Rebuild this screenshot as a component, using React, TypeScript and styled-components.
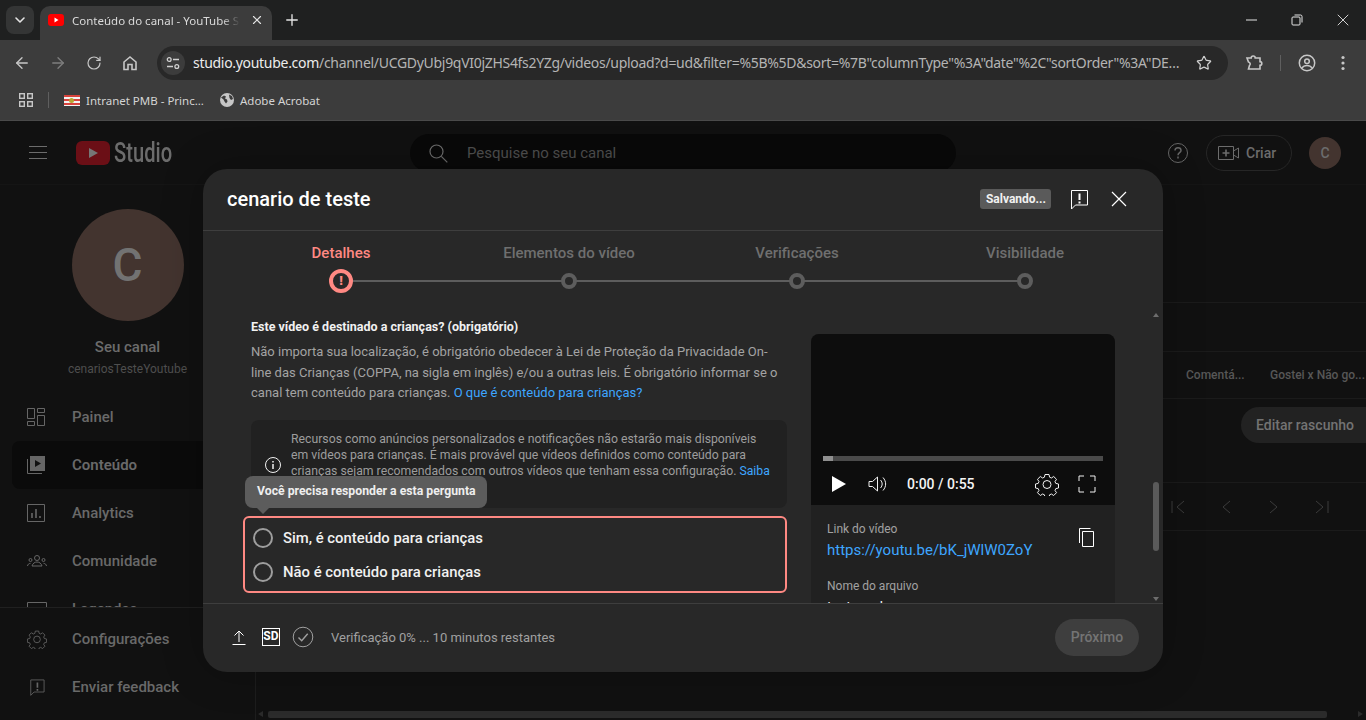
import React from "react";
import styled, { createGlobalStyle } from "styled-components";
import {
  ArrowLeft,
  ArrowRight,
  ChevronDown,
  Plus,
  RotateCw,
  Star,
  X,
} from "lucide-react";

const GlobalStyle = createGlobalStyle`
  html, body { margin: 0; padding: 0; height: 720px; overflow: hidden; background: #111; }
  * { box-sizing: border-box; }
  body { font-family: Roboto, "Liberation Sans", sans-serif; }
`;

/* ---------- browser chrome ---------- */

const Page = styled.div`
  width: 1366px;
  height: 720px;
  position: relative;
  display: flex;
  flex-direction: column;
  overflow: hidden;
`;

const TabStrip = styled.div`
  height: 40px;
  background: #1f2020;
  display: flex;
  align-items: flex-end;
  padding-left: 6px;
  color: #e4e4e4;
`;

const TabSearch = styled.div`
  width: 28px;
  height: 28px;
  margin: 0 6px 6px 0;
  border-radius: 8px;
  background: #343535;
  display: flex;
  align-items: center;
  justify-content: center;
`;

const Tab = styled.div`
  width: 232px;
  height: 34px;
  background: #3c3c3c;
  border-radius: 10px 10px 0 0;
  display: flex;
  align-items: center;
  padding: 0 8px 6px;
  font: 11.5px "Noto Sans", sans-serif;
`;

const TabTitle = styled.span`
  margin-left: 8px;
  width: 178px;
  white-space: nowrap;
  overflow: hidden;
  color: #dadada;
  mask-image: linear-gradient(90deg, #000 150px, transparent 168px);
`;

const NewTab = styled.div`
  width: 40px;
  height: 34px;
  padding-bottom: 6px;
  display: flex;
  align-items: center;
  justify-content: center;
`;

const WindowControls = styled.div`
  margin-left: auto;
  height: 40px;
  display: flex;
  align-items: center;
`;

const WindowButton = styled.div`
  width: 46px;
  display: flex;
  justify-content: center;
`;

const Toolbar = styled.div`
  height: 45px;
  background: #3c3c3c;
  display: flex;
  align-items: center;
  padding: 1px 0 0 4px;
  color: #c7c7c7;
`;

const ToolButton = styled.div<{ $dim?: boolean }>`
  width: 36px;
  height: 34px;
  display: flex;
  align-items: center;
  justify-content: center;
  color: ${(p) => (p.$dim ? "#7d7d7d" : "#c7c7c7")};
`;

const Omnibox = styled.div`
  width: 1071px;
  height: 34px;
  margin: 0 8px 0 9px;
  border-radius: 17px;
  background: #282828;
  display: flex;
  align-items: center;
  padding: 0 16px 0 4px;
`;

const SiteInfo = styled.div`
  width: 24px;
  height: 24px;
  border-radius: 50%;
  background: #3c3c3c;
  display: flex;
  align-items: center;
  justify-content: center;
  flex: none;
`;

const Url = styled.div`
  flex: 1;
  margin: 0 12px 0 8px;
  font: 14px "Noto Sans", sans-serif;
  letter-spacing: -0.3px;
  line-height: 18px;
  padding-bottom: 1px;
  color: #b4b4b4;
  white-space: nowrap;
  overflow: hidden;
  text-overflow: ellipsis;
`;

const UrlHost = styled.span`
  color: #ececec;
`;

const ToolSeparator = styled.div`
  width: 1px;
  height: 16px;
  background: #5f5f5f;
  margin: 0 8px;
`;

const Bookmarks = styled.div`
  height: 36px;
  background: #3c3c3c;
  border-bottom: 1px solid #4a4a4a;
  display: flex;
  align-items: center;
  padding: 0 0 5px 19px;
  font: 11.5px "Noto Sans", sans-serif;
  color: #d4d4d4;
`;

const BarSeparator = styled.div`
  width: 1px;
  height: 16px;
  background: #5f5f5f;
  margin: 0 15px 0 15px;
`;

const Bookmark = styled.div`
  display: flex;
  align-items: center;
  gap: 6px;
  margin-right: 16px;
  white-space: nowrap;
`;

const Flag = styled.div`
  width: 16px;
  height: 11px;
  background: repeating-linear-gradient(180deg, #d8433c 0 2px, #f3f3f3 2px 4px);
  position: relative;
`;

const FlagSeal = styled.div`
  position: absolute;
  left: 5px;
  top: 3px;
  width: 5px;
  height: 5px;
  background: #b8a632;
  border-radius: 50%;
`;

/* ---------- dimmed studio page ---------- */

const Studio = styled.div`
  flex: 1;
  min-height: 0;
  display: flex;
  flex-direction: column;
  background: #111111;
  color: #6c6c6c;
`;

const StudioHeader = styled.div`
  height: 64px;
  flex: none;
  display: flex;
  align-items: center;
  padding: 0 25px 0 29px;
  border-bottom: 1px solid #151515;
`;

const Burger = styled.div`
  width: 18px;
  height: 13px;
  border-top: 1px solid #6c6c6c;
  border-bottom: 1px solid #6c6c6c;
  position: relative;
  margin-right: 29px;
  &::after {
    content: "";
    position: absolute;
    left: 0;
    right: 0;
    top: 5px;
    height: 1px;
    background: #6c6c6c;
  }
`;

const LogoMark = styled.div`
  width: 34px;
  height: 24px;
  background: #6b0f16;
  border-radius: 6px;
  display: flex;
  align-items: center;
  justify-content: center;
`;

const LogoPlay = styled.div`
  width: 0;
  height: 0;
  border-left: 9px solid #767676;
  border-top: 5.5px solid transparent;
  border-bottom: 5.5px solid transparent;
`;

const LogoText = styled.div`
  font: 500 28px Roboto, sans-serif;
  color: #6c6c6c;
  margin-left: 4px;
  width: 58px;
  transform: scaleX(0.72);
  transform-origin: left center;
`;

const SearchBox = styled.div`
  width: 546px;
  height: 38px;
  margin-left: 238px;
  background: #090909;
  border-radius: 19px;
  display: flex;
  align-items: center;
  padding-left: 18px;
  gap: 19px;
  font-size: 15px;
  color: #4e4e4e;
`;

const HeaderRight = styled.div`
  margin-left: auto;
  display: flex;
  align-items: center;
`;

const CreateButton = styled.div`
  width: 86px;
  height: 36px;
  margin: 0 17px 0 17px;
  border: 1px solid #262626;
  border-radius: 18px;
  display: flex;
  align-items: center;
  padding-left: 11px;
  gap: 7px;
  font-size: 14px;
  font-weight: 500;
`;

const SmallAvatar = styled.div`
  width: 32px;
  height: 32px;
  border-radius: 50%;
  background: #43342f;
  display: flex;
  align-items: center;
  justify-content: center;
  font-size: 14px;
  font-weight: 500;
`;

const StudioBody = styled.div`
  flex: 1;
  min-height: 0;
  display: flex;
`;

const Sidebar = styled.aside`
  width: 256px;
  flex: none;
  border-right: 1px solid #1d1d1d;
  display: flex;
  flex-direction: column;
`;

const ChannelBox = styled.div`
  padding-top: 24px;
  height: 208px;
  flex: none;
  display: flex;
  flex-direction: column;
  align-items: center;
`;

const BigAvatar = styled.div`
  width: 112px;
  height: 112px;
  border-radius: 50%;
  background: #43342f;
  display: flex;
  align-items: center;
  justify-content: center;
  font-size: 46px;
  font-weight: 500;
  color: #727272;
`;

const ChannelName = styled.div`
  margin-top: 17px;
  font-size: 15px;
  font-weight: 500;
`;

const ChannelHandle = styled.div`
  margin-top: 6px;
  font-size: 12px;
  color: #4e4e4e;
`;

const NavList = styled.div`
  flex: 1;
  min-height: 0;
  overflow: hidden;
  padding-left: 12px;
`;

const NavItem = styled.div<{ $active?: boolean }>`
  height: 48px;
  display: flex;
  align-items: center;
  gap: 25px;
  padding-left: 15px;
  font-size: 15px;
  font-weight: ${(p) => (p.$active ? 600 : 500)};
  border-radius: 8px 0 0 8px;
  background: ${(p) => (p.$active ? "#0b0b0b" : "transparent")};
  color: #696969;
`;

const NavIconSlot = styled.span`
  display: flex;
  width: 20px;
  flex: none;
`;

const SideFooter = styled.div`
  flex: none;
  height: 113px;
  border-top: 1px solid #202020;
  padding: 7px 0 0 12px;
  background: #111111;
`;

const MainArea = styled.main`
  flex: 1;
  display: flex;
  flex-direction: column;
  min-width: 0;
`;

const RowLine = styled.div<{ $h: number }>`
  height: ${(p) => p.$h}px;
  flex: none;
  border-bottom: 1px solid #1b1b1b;
  display: flex;
  align-items: center;
`;

const HeadCell = styled.div<{ $w: number }>`
  width: ${(p) => p.$w}px;
  font-size: 12px;
  font-weight: 500;
  color: #575757;
  white-space: nowrap;
`;

const DraftButton = styled.div`
  margin-left: auto;
  width: 125px;
  height: 36px;
  margin-top: -32px;
  background: #222222;
  border-radius: 18px 0 0 18px;
  display: flex;
  align-items: center;
  padding-left: 15px;
  font-size: 14px;
  font-weight: 500;
  color: #737373;
  white-space: nowrap;
`;

const Pager = styled.div`
  display: flex;
  gap: 24px;
  margin-left: 910px;
  color: #3c3c3c;
`;

const HScroll = styled.div`
  margin: auto 39px 2px 12px;
  height: 7px;
  background: #2b2b2b;
  border-radius: 2px;
  position: relative;
  &::before,
  &::after {
    content: "";
    position: absolute;
    top: 0;
    border-top: 3.5px solid transparent;
    border-bottom: 3.5px solid transparent;
  }
  &::before {
    left: -10px;
    border-right: 5px solid #2b2b2b;
  }
  &::after {
    right: -36px;
    border-left: 5px solid #2b2b2b;
  }
`;

/* ---------- upload dialog ---------- */

const Dialog = styled.section`
  position: absolute;
  left: 203px;
  top: 169px;
  width: 960px;
  height: 503px;
  background: #282828;
  border-radius: 24px;
  display: flex;
  flex-direction: column;
  color: #fff;
  overflow: hidden;
  box-shadow: 0 0 40px rgba(0, 0, 0, 0.25);
`;

const DialogHeader = styled.header`
  height: 62px;
  flex: none;
  border-bottom: 1px solid #3e3e3e;
  display: flex;
  align-items: center;
  padding: 0 36px 2px 24px;
`;

const DialogTitle = styled.h1`
  margin: 0;
  font-size: 20px;
  font-weight: 500;
  flex: 1;
`;

const SavingChip = styled.div`
  height: 20px;
  padding: 0 5px 0 6px;
  border-radius: 3px;
  background: #5a5a5a;
  font-size: 12px;
  font-weight: 700;
  line-height: 20px;
  color: #f1f1f1;
  margin-right: 16px;
`;

const HeaderIcon = styled.div<{ $gap?: number }>`
  display: flex;
  margin-left: ${(p) => p.$gap ?? 0}px;
`;

const Stepper = styled.div`
  height: 79px;
  flex: none;
  padding: 0 24px;
  display: flex;
`;

const Step = styled.div<{ $line: boolean; $active?: boolean }>`
  width: 228px;
  position: relative;
  display: flex;
  flex-direction: column;
  align-items: center;
  padding-top: 14px;
  font-size: 15px;
  font-weight: 500;
  color: ${(p) => (p.$active ? "#ff8983" : "#6f6f6f")};
  &::after {
    content: "";
    display: ${(p) => (p.$line ? "block" : "none")};
    position: absolute;
    left: 50%;
    width: 100%;
    top: 49px;
    height: 2px;
    background: #5d5d5d;
  }
`;

const StepLabel = styled.div`
  height: 17px;
  line-height: 17px;
`;

const StepDotSlot = styled.div`
  height: 24px;
  margin-top: 7px;
  display: flex;
  align-items: center;
  position: relative;
  z-index: 1;
`;

const StepDot = styled.div`
  width: 16px;
  height: 16px;
  border-radius: 50%;
  border: 4px solid #5d5d5d;
  background: #282828;
`;

const StepError = styled.div`
  width: 24px;
  height: 24px;
  border-radius: 50%;
  border: 4px solid #ff8983;
  background: #282828;
  color: #ff8983;
  font-size: 13px;
  font-weight: 900;
  line-height: 16px;
  text-align: center;
`;

const ScrollArea = styled.div`
  flex: 1;
  min-height: 0;
  display: flex;
  gap: 24px;
  padding: 0 0 0 48px;
  overflow: hidden;
  position: relative;
`;

const LeftColumn = styled.div`
  width: 536px;
  flex: none;
  padding-top: 8px;
  position: relative;
`;

const QuestionTitle = styled.div`
  font-size: 12.5px;
  font-weight: 700;
  line-height: 18px;
  color: #f1f1f1;
`;

const Explain = styled.p`
  margin: 6px 0 0;
  font-size: 13px;
  line-height: 20.5px;
  color: #a3a3a3;
`;

const Anchor = styled.span`
  color: #3ea6ff;
`;

const Notice = styled.div`
  margin-top: 16px;
  height: 88px;
  background: #212121;
  border-radius: 8px;
  display: flex;
  align-items: flex-start;
  padding: 11px 0 0 13px;
  gap: 9px;
  font-size: 12.25px;
  line-height: 16px;
  color: #9d9d9d;
`;

const NoticeIcon = styled.div`
  margin-top: 25px;
  flex: none;
  display: flex;
`;

const NoticeText = styled.div`
  width: 483px;
`;

const Tooltip = styled.div`
  position: absolute;
  left: -6px;
  top: 166px;
  width: 242px;
  height: 32px;
  background: #5c5c5c;
  border-radius: 8px;
  font-size: 12.25px;
  font-weight: 700;
  line-height: 30px;
  padding-left: 12px;
  color: #eeeeee;
  z-index: 2;
  &::after {
    content: "";
    position: absolute;
    left: 12px;
    top: 32px;
    border-left: 6px solid transparent;
    border-right: 6px solid transparent;
    border-top: 6px solid #5c5c5c;
  }
`;

const RadioBox = styled.div`
  margin: 8px 0 0 -8px;
  width: 544px;
  height: 77px;
  border: 2px solid #ff8983;
  border-radius: 6px;
  padding: 3px 0 0 8px;
`;

const RadioRow = styled.label`
  height: 34px;
  display: flex;
  align-items: center;
  gap: 10px;
  font-size: 14.85px;
  font-weight: 500;
  color: #f1f1f1;
`;

const RadioCircle = styled.span`
  width: 20px;
  height: 20px;
  border-radius: 50%;
  border: 2px solid #9e9e9e;
  flex: none;
`;

const PreviewCard = styled.div`
  width: 304px;
  flex: none;
  margin-top: 24px;
  border-radius: 8px 8px 0 0;
  background: #212121;
  overflow: hidden;
  height: 300px;
`;

const VideoBox = styled.div`
  height: 171px;
  background: #0d0d0d;
  padding: 122px 12px 0;
`;

const Progress = styled.div`
  height: 5px;
  background: #4a4a4a;
`;

const ProgressFill = styled.div<{ $pct: number }>`
  height: 5px;
  width: ${(p) => p.$pct}%;
  background: #8f8f8f;
`;

const Controls = styled.div`
  height: 46px;
  display: flex;
  align-items: center;
  padding: 0 4px 0 8px;
`;

const TimeLabel = styled.div`
  margin-left: 16px;
  font-size: 14px;
  font-weight: 500;
  color: #f4f4f4;
  flex: 1;
`;

const CtlIcon = styled.div<{ $gap?: number }>`
  display: flex;
  margin-left: ${(p) => p.$gap ?? 0}px;
`;

const InfoBlock = styled.div`
  padding: 16px 16px 0;
  position: relative;
`;

const InfoLabel = styled.div`
  font-size: 12px;
  line-height: 16px;
  color: #a1a1a1;
`;

const InfoLink = styled.div`
  margin-top: 3px;
  font-size: 15px;
  line-height: 20px;
  color: #3ea6ff;
  height: 38px;
`;

const InfoValue = styled.div`
  margin-top: 3px;
  font-size: 14px;
  line-height: 20px;
  color: #f1f1f1;
`;

const CopyIcon = styled.div`
  position: absolute;
  right: 17px;
  top: 20px;
  display: flex;
`;

const ScrollRail = styled.div`
  position: absolute;
  right: 0;
  top: 0;
  bottom: 0;
  width: 12px;
`;

const RailArrow = styled.div<{ $up?: boolean }>`
  position: absolute;
  left: 2px;
  ${(p) => (p.$up ? "top: 3px;" : "bottom: 2px;")}
  border-left: 3.5px solid transparent;
  border-right: 3.5px solid transparent;
  ${(p) => (p.$up ? "border-bottom" : "border-top")}: 4px solid #6d6d6d;
`;

const RailThumb = styled.div`
  position: absolute;
  left: 2px;
  top: 172px;
  width: 6px;
  height: 69px;
  border-radius: 3px;
  background: #5a5a5a;
`;

const DialogFooter = styled.footer`
  height: 69px;
  flex: none;
  border-top: 1px solid #3e3e3e;
  display: flex;
  align-items: center;
  padding: 0 24px 2px 28px;
`;

const FooterStatus = styled.div`
  margin-left: 17px;
  font-size: 13px;
  color: #a0a0a0;
  flex: 1;
`;

const SdBadge = styled.div`
  width: 18px;
  height: 18px;
  margin: 0 12px 0 15px;
  border: 1.5px solid #fff;
  font-size: 12px;
  font-weight: 700;
  line-height: 15px;
  text-align: center;
  letter-spacing: 0.2px;
`;

const NextButton = styled.div`
  width: 84px;
  height: 37px;
  border-radius: 19px;
  background: #3e3e3e;
  display: flex;
  align-items: center;
  justify-content: center;
  font-size: 14px;
  font-weight: 500;
  color: #747474;
`;

/* ---------- drawings ---------- */

type IconProps = { size?: number; color?: string };

const Line = ({ size = 24, color = "currentColor", d }: IconProps & { d: string }) => (
  <svg width={size} height={size} viewBox="0 0 24 24" fill="none" stroke={color} strokeWidth="1">
    <path d={d} />
  </svg>
);

const FeedbackIcon = ({ size = 24, color = "currentColor" }: IconProps) => (
  <svg width={size} height={size} viewBox="0 0 24 24" fill="none" stroke={color} strokeWidth="1">
    <path d="M4.5 3.500h16v14.500H8.500L4.500 22z" />
    <path d="M12.500 6.500v6.500M12.500 14.500v2" strokeWidth="2" />
  </svg>
);

const gear =
  "M10 2.500h4l.6 2.700 1.800.8 2.300-1.500 2.800 2.800-1.500 2.300.8 1.800 2.700.6v4l-2.700.6-.8 1.800 1.500 2.300-2.800 2.800-2.300-1.500-1.800.8-.6 2.700h-4l-.6-2.700-1.800-.8-2.300 1.500-2.800-2.800 1.500-2.300-.8-1.800-2.700-.6v-4l2.700-.6.8-1.800-1.500-2.300 2.800-2.800 2.300 1.500 1.800-.8zM12 8.500a4 4 0 1 0 0 8 4 4 0 0 0 0-8z";

const YtFavicon = () => (
  <svg width="16" height="12" viewBox="0 0 16 12">
    <rect width="16" height="12" rx="3" fill="#f00" />
    <path d="M6.500 3.500v5l4-2.500z" fill="#fff" />
  </svg>
);

const HomeIcon = () => (
  <svg width="18" height="18" viewBox="0 0 18 18" fill="none" stroke="currentColor" strokeWidth="1.6">
    <path d="M3 8l6-5 6 5v7.500h-4v-5H7v5H3z" />
  </svg>
);

const TuneIcon = () => (
  <svg width="14" height="14" viewBox="0 0 14 14" fill="none" stroke="#d0d0d0" strokeWidth="1.3">
    <circle cx="3.2" cy="3.500" r="1.900" />
    <path d="M7 3.500h6M1 10.500h6" />
    <circle cx="10.800" cy="10.500" r="1.900" />
  </svg>
);

const PuzzleIcon = () => (
  <svg width="18" height="18" viewBox="0 0 18 18" fill="none" stroke="currentColor" strokeWidth="1.6">
    <path d="M2 4h4.200a2 2 0 0 1 4 0H15v3.600a1.800 1.800 0 0 1 0 3.600V15H3.500l1-3.500a2 2 0 0 0-1-3.500z" />
  </svg>
);

const ProfileIcon = () => (
  <svg width="18" height="18" viewBox="0 0 18 18" fill="none" stroke="currentColor" strokeWidth="1.500">
    <circle cx="9" cy="9" r="7.700" />
    <circle cx="9" cy="7.200" r="2.300" />
    <path d="M3.800 14c1.400-2 3.200-2.600 5.200-2.600s3.800.6 5.200 2.600" />
  </svg>
);

const DotsIcon = () => (
  <svg width="18" height="18" viewBox="0 0 18 18" fill="currentColor">
    <circle cx="9" cy="3.500" r="1.600" />
    <circle cx="9" cy="9" r="1.600" />
    <circle cx="9" cy="14.500" r="1.600" />
  </svg>
);

const AppsIcon = () => (
  <svg width="14" height="14" viewBox="0 0 14 14" fill="none" stroke="#c7c7c7" strokeWidth="1.400">
    <rect x="0.700" y="0.700" width="4.600" height="4.600" />
    <rect x="8.700" y="0.700" width="4.600" height="4.600" />
    <rect x="0.700" y="8.700" width="4.600" height="4.600" />
    <rect x="8.700" y="8.700" width="4.600" height="4.600" />
  </svg>
);

const SolidGlobe = () => (
  <svg width="14" height="14" viewBox="0 0 14 14">
    <circle cx="7" cy="7" r="7" fill="#c7c7c7" />
    <path d="M1 4.500l3-2 2 1-1 2 2 1 .5 2-1.500 2-1.500-2-1-2zM9 1.500l3 1.500 1 3-2 1-1.500-2z" fill="#3c3c3c" />
  </svg>
);

const RestoreIcon = () => (
  <svg width="12" height="12" viewBox="0 0 12 12" fill="none" stroke="#e4e4e4" strokeWidth="1">
    <rect x="1" y="3" width="8" height="8" rx="1" />
    <path d="M3.500 1h6a1.500 1.500 0 0 1 1.500 1.500v6" />
  </svg>
);

const SearchIcon = () => (
  <svg width="20" height="20" viewBox="0 0 20 20" fill="none" stroke="#6c6c6c" strokeWidth="1.200">
    <circle cx="8.500" cy="8.500" r="6.500" />
    <path d="M13.300 13.300l6 6" />
  </svg>
);

const HelpIcon = () => (
  <svg width="22" height="22" viewBox="0 0 22 22" fill="none" stroke="#666" strokeWidth="1">
    <circle cx="11" cy="11" r="9.500" />
    <path d="M8 8.600c0-1.700 1.300-2.800 3-2.800s3 1 3 2.600c0 2.300-3 2.200-3 4.800M11 14.600v1.800" strokeWidth="1.500" />
  </svg>
);

const CreateIcon = () => (
  <svg width="21" height="16" viewBox="0 0 21 16" fill="none" stroke="#6c6c6c" strokeWidth="1">
    <path d="M.5 1.500h15v13H.5zM15.500 6l5-3v10l-5-3" />
    <path d="M8 4.500v7M4.500 8h7" strokeWidth="1.600" />
  </svg>
);

const grey = "#666";

const navIcons: Record<string, React.ReactNode> = {
  painel: (
    <svg width="18" height="18" viewBox="0 0 18 18" fill="none" stroke={grey}>
      <path d="M.5.500h7v10h-7zM.5 13.500h7v4h-7zM10.500.500h7v4h-7zM10.500 7.500h7v10h-7z" />
    </svg>
  ),
  conteudo: (
    <svg width="18" height="18" viewBox="0 0 18 18">
      <path d="M3 0h15v15H3z" fill={grey} />
      <path d="M8 4v7l6-3.500z" fill="#111" />
      <path d="M.5 3v14.500H15" fill="none" stroke={grey} />
    </svg>
  ),
  analytics: (
    <svg width="18" height="18" viewBox="0 0 18 18" fill="none" stroke={grey}>
      <path d="M.5.500h17v17H.5z" />
      <path d="M5 9v5M9 5v9M13 12v2" strokeWidth="1.600" />
    </svg>
  ),
  comunidade: (
    <svg width="20" height="18" viewBox="0 0 20 18" fill="none" stroke={grey}>
      <circle cx="10" cy="6" r="2.500" />
      <circle cx="3.500" cy="8" r="1.500" />
      <circle cx="16.500" cy="8" r="1.500" />
      <path d="M5 14c.8-2.600 2.600-4 5-4s4.200 1.400 5 4zM.5 14c.3-1.600 1.200-2.500 3-2.700M19.500 14c-.3-1.600-1.200-2.500-3-2.700" />
    </svg>
  ),
  legendas: (
    <svg width="20" height="18" viewBox="0 0 20 18" fill="none" stroke={grey}>
      <path d="M.5 2.500h19v13H.5z" />
    </svg>
  ),
};

const PlainX = ({ size = 16, color = "#fff" }: IconProps) => (
  <svg width={size} height={size} viewBox="0 0 16 16" fill="none" stroke={color} strokeWidth="1.200">
    <path d="M1 1l14 14M15 1L1 15" />
  </svg>
);

const steps = ["Detalhes", "Elementos do vídeo", "Verificações", "Visibilidade"];
const navItems = [
  { key: "painel", label: "Painel" },
  { key: "conteudo", label: "Conteúdo", active: true },
  { key: "analytics", label: "Analytics" },
  { key: "comunidade", label: "Comunidade" },
  { key: "legendas", label: "Legendas" },
];

export default function App() {
  return (
    <Page>
      <GlobalStyle />
      <TabStrip>
        <TabSearch>
          <ChevronDown size={16} strokeWidth={2.4} />
        </TabSearch>
        <Tab>
          <YtFavicon />
          <TabTitle>Conteúdo do canal - YouTube Studio</TabTitle>
          <X size={14} strokeWidth={2} />
        </Tab>
        <NewTab>
          <Plus size={18} strokeWidth={1.8} />
        </NewTab>
        <WindowControls>
          <WindowButton>
            <svg width="11" height="2" viewBox="0 0 11 2">
              <path d="M0 1h11" stroke="#e4e4e4" />
            </svg>
          </WindowButton>
          <WindowButton>
            <RestoreIcon />
          </WindowButton>
          <WindowButton>
            <PlainX size={12} color="#e4e4e4" />
          </WindowButton>
        </WindowControls>
      </TabStrip>

      <Toolbar>
        <ToolButton>
          <ArrowLeft size={18} strokeWidth={1.8} />
        </ToolButton>
        <ToolButton $dim>
          <ArrowRight size={18} strokeWidth={1.8} />
        </ToolButton>
        <ToolButton>
          <RotateCw size={16} strokeWidth={1.8} />
        </ToolButton>
        <ToolButton>
          <HomeIcon />
        </ToolButton>
        <Omnibox>
          <SiteInfo>
            <TuneIcon />
          </SiteInfo>
          <Url>
            <UrlHost>studio.youtube.com</UrlHost>
            /channel/UCGDyUbj9qVI0jZHS4fs2YZg/videos/upload?d=ud&amp;filter=%5B%5D&amp;sort=%7B"columnType"%3A"date"%2C"sortOrder"%3A"DESCENDING"%7D
          </Url>
          <Star size={16} strokeWidth={1.8} color="#d0d0d0" />
        </Omnibox>
        <ToolButton>
          <PuzzleIcon />
        </ToolButton>
        <ToolSeparator />
        <ToolButton>
          <ProfileIcon />
        </ToolButton>
        <ToolButton>
          <DotsIcon />
        </ToolButton>
      </Toolbar>

      <Bookmarks>
        <AppsIcon />
        <BarSeparator />
        <Bookmark>
          <Flag>
            <FlagSeal />
          </Flag>
          Intranet PMB - Princ...
        </Bookmark>
        <Bookmark>
          <SolidGlobe />
          Adobe Acrobat
        </Bookmark>
      </Bookmarks>

      <Studio>
        <StudioHeader>
          <Burger />
          <LogoMark>
            <LogoPlay />
          </LogoMark>
          <LogoText>Studio</LogoText>
          <SearchBox>
            <SearchIcon />
            Pesquise no seu canal
          </SearchBox>
          <HeaderRight>
            <HelpIcon />
            <CreateButton>
              <CreateIcon />
              Criar
            </CreateButton>
            <SmallAvatar>C</SmallAvatar>
          </HeaderRight>
        </StudioHeader>
        <StudioBody>
          <Sidebar>
            <ChannelBox>
              <BigAvatar>C</BigAvatar>
              <ChannelName>Seu canal</ChannelName>
              <ChannelHandle>cenariosTesteYoutube</ChannelHandle>
            </ChannelBox>
            <NavList>
              {navItems.map((item) => (
                <NavItem key={item.key} $active={item.active}>
                  <NavIconSlot>{navIcons[item.key]}</NavIconSlot>
                  {item.label}
                </NavItem>
              ))}
            </NavList>
            <SideFooter>
              <NavItem>
                <Line size={20} color={grey} d={gear} />
                Configurações
              </NavItem>
              <NavItem>
                <FeedbackIcon size={20} color={grey} />
                Enviar feedback
              </NavItem>
            </SideFooter>
          </Sidebar>
          <MainArea>
            <RowLine $h={118} />
            <RowLine $h={49} />
            <RowLine $h={47}>
              <HeadCell $w={930} />
              <HeadCell $w={84}>Comentá...</HeadCell>
              <HeadCell $w={96}>Gostei x Não go...</HeadCell>
            </RowLine>
            <RowLine $h={84}>
              <DraftButton>Editar rascunho</DraftButton>
            </RowLine>
            <RowLine $h={48}>
              <Pager>
                <Line d="M6 6v12M18 6l-7 6 7 6" />
                <Line d="M16 6l-7 6 7 6" />
                <Line d="M8 6l7 6-7 6" />
                <Line d="M6 6l7 6-7 6M18 6v12" />
              </Pager>
            </RowLine>
            <HScroll />
          </MainArea>
        </StudioBody>
      </Studio>

      <Dialog>
        <DialogHeader>
          <DialogTitle>cenario de teste</DialogTitle>
          <SavingChip>Salvando...</SavingChip>
          <HeaderIcon>
            <FeedbackIcon color="#fff" />
          </HeaderIcon>
          <HeaderIcon $gap={20}>
            <PlainX />
          </HeaderIcon>
        </DialogHeader>

        <Stepper>
          {steps.map((label, i) => (
            <Step key={label} $line={i < steps.length - 1} $active={i === 0}>
              <StepLabel>{label}</StepLabel>
              <StepDotSlot>{i === 0 ? <StepError>!</StepError> : <StepDot />}</StepDotSlot>
            </Step>
          ))}
        </Stepper>

        <ScrollArea>
          <LeftColumn>
            <QuestionTitle>Este vídeo é destinado a crianças? (obrigatório)</QuestionTitle>
            <Explain>
              Não importa sua localização, é obrigatório obedecer à Lei de Proteção da Privacidade On-line
              das Crianças (COPPA, na sigla em inglês) e/ou a outras leis. É obrigatório informar se o canal
              tem conteúdo para crianças. <Anchor>O que é conteúdo para crianças?</Anchor>
            </Explain>
            <Notice>
              <NoticeIcon>
                <svg width="18" height="18" viewBox="0 0 18 18" fill="none" stroke="#f1f1f1">
                  <circle cx="9" cy="9" r="7.500" />
                  <path d="M9 8v5M9 5v1.600" strokeWidth="1.500" />
                </svg>
              </NoticeIcon>
              <NoticeText>
                Recursos como anúncios personalizados e notificações não estarão mais disponíveis em vídeos
                para crianças. É mais provável que vídeos definidos como conteúdo para crianças sejam
                recomendados com outros vídeos que tenham essa configuração. <Anchor>Saiba mais</Anchor>
              </NoticeText>
            </Notice>
            <Tooltip>Você precisa responder a esta pergunta</Tooltip>
            <RadioBox>
              <RadioRow>
                <RadioCircle />
                Sim, é conteúdo para crianças
              </RadioRow>
              <RadioRow>
                <RadioCircle />
                Não é conteúdo para crianças
              </RadioRow>
            </RadioBox>
          </LeftColumn>

          <PreviewCard>
            <VideoBox>
              <Progress>
                <ProgressFill $pct={3.5} />
              </Progress>
              <Controls>
                <svg width="16" height="18" viewBox="0 0 16 18">
                  <path d="M1 1v16l14-8z" fill="#fff" />
                </svg>
                <CtlIcon $gap={20}>
                  <Line color="#f1f1f1" d="M2 9.500v5h3.500l5 4.500V5l-5 4.500zM13.500 8c2.200 2.500 2.200 5.500 0 8M16 5.500c3.500 4 3.500 9 0 13" />
                </CtlIcon>
                <TimeLabel>0:00 / 0:55</TimeLabel>
                <CtlIcon>
                  <Line color="#f1f1f1" d={gear} />
                </CtlIcon>
                <CtlIcon $gap={16}>
                  <Line color="#f1f1f1" d="M4 9V4h5M15 4h5v5M20 15v5h-5M9 20H4v-5" />
                </CtlIcon>
              </Controls>
            </VideoBox>
            <InfoBlock>
              <InfoLabel>Link do vídeo</InfoLabel>
              <InfoLink>https://youtu.be/bK_jWlW0ZoY</InfoLink>
              <CopyIcon>
                <Line color="#fff" d="M8.500 6.500h11v15h-11zM5.500 18V3.500h11" />
              </CopyIcon>
              <InfoLabel>Nome do arquivo</InfoLabel>
              <InfoValue>teste.webm</InfoValue>
            </InfoBlock>
          </PreviewCard>

          <ScrollRail>
            <RailArrow $up />
            <RailThumb />
            <RailArrow />
          </ScrollRail>
        </ScrollArea>

        <DialogFooter>
          <svg width="16" height="18" viewBox="0 0 16 18" fill="none" stroke="#fff">
            <path d="M8 14V3M3.500 7.500L8 3l4.500 4.500M1.500 16.500h13" />
          </svg>
          <SdBadge>SD</SdBadge>
          <svg width="22" height="22" viewBox="0 0 22 22" fill="none" stroke="#a0a0a0">
            <circle cx="11" cy="11" r="9.800" />
            <path d="M6.500 11.500l3.200 3.200 6-7" strokeWidth="1.400" />
          </svg>
          <FooterStatus>Verificação 0% ... 10 minutos restantes</FooterStatus>
          <NextButton>Próximo</NextButton>
        </DialogFooter>
      </Dialog>
    </Page>
  );
}
